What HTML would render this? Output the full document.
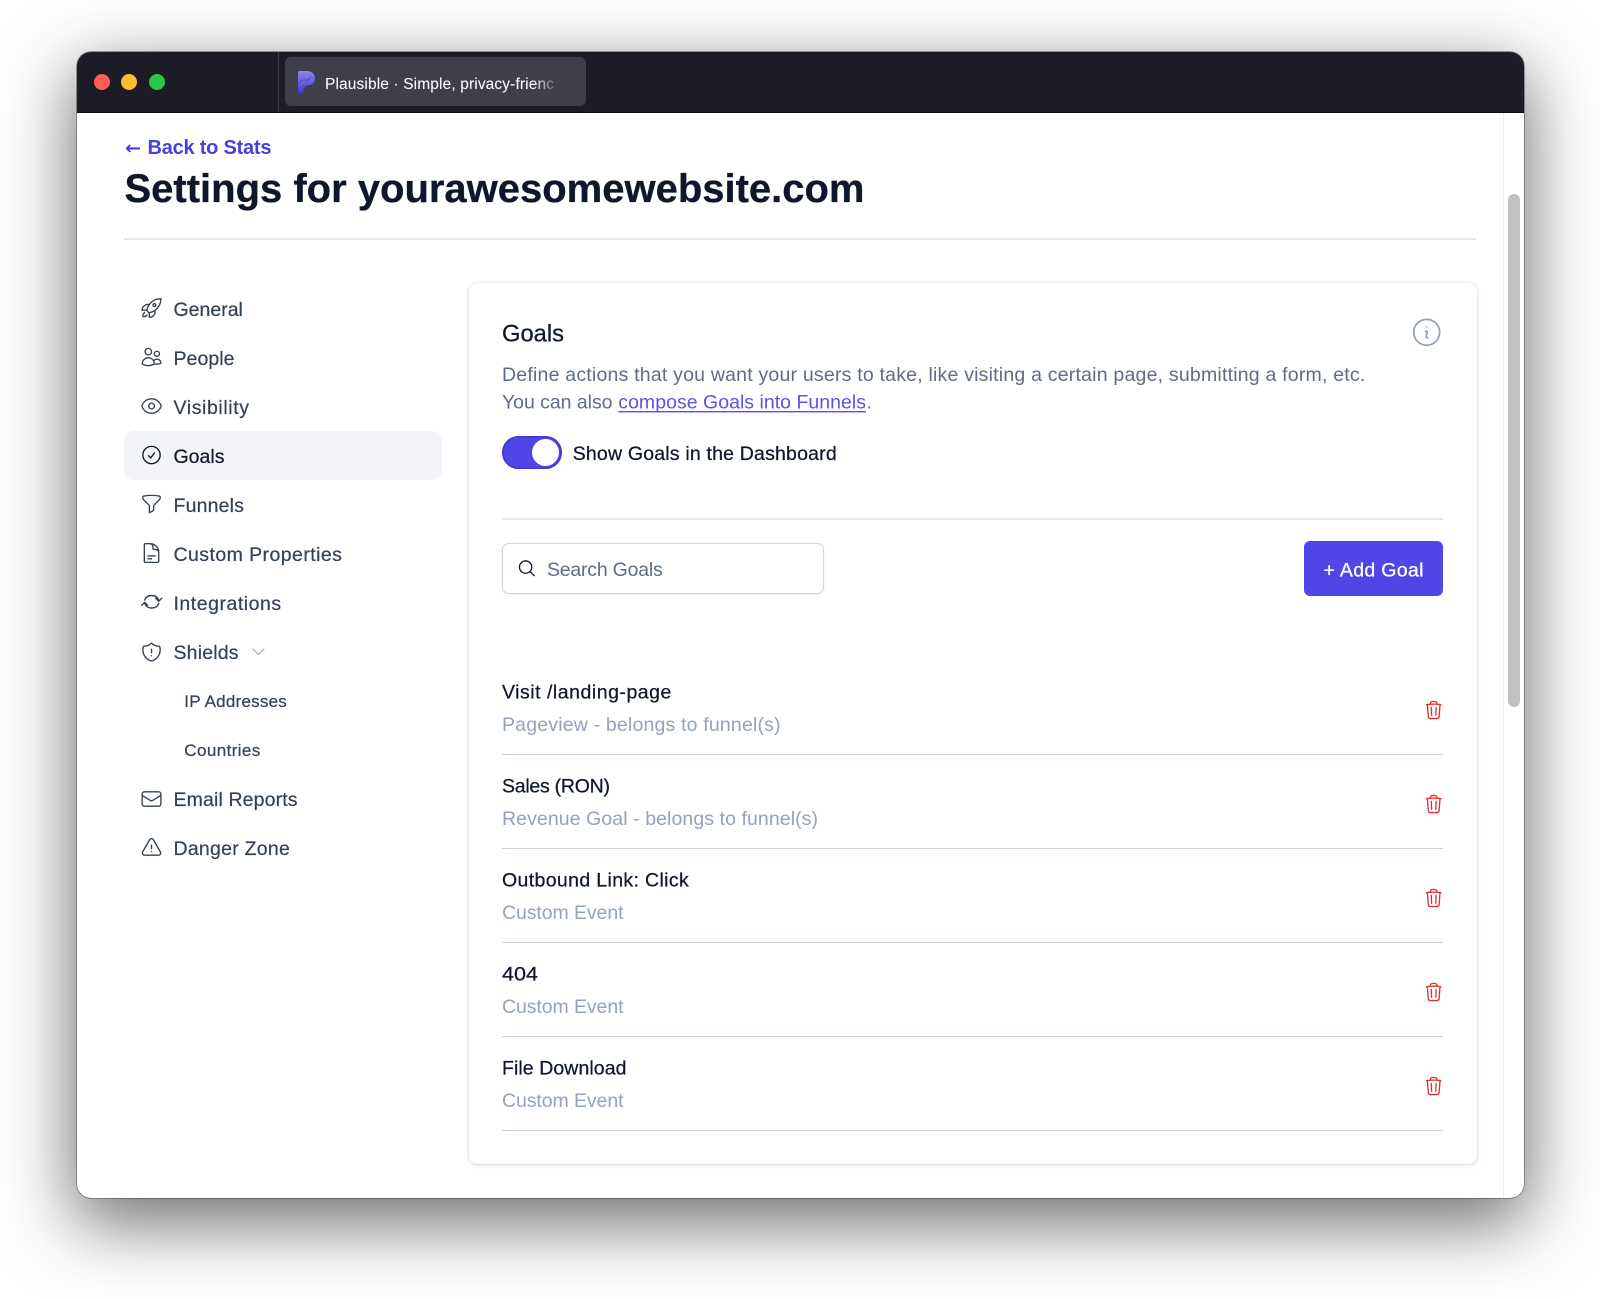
<!DOCTYPE html>
<html lang="en">
<head>
<meta charset="utf-8">
<title>Settings for yourawesomewebsite.com</title>
<style>
html,body{margin:0;padding:0;background:#fff;width:1600px;height:1299px;overflow:hidden;font-family:"Liberation Sans",sans-serif}
.win{position:absolute;left:76.5px;top:52px;width:1447px;height:1146px;border-radius:14px;background:#fff;box-shadow:0 0 0 .6px rgba(50,50,50,.7),0 22px 70px 4px rgba(0,0,0,.56)}
.clip{position:absolute;inset:0;border-radius:14px;overflow:hidden}
.bar{position:absolute;left:0;top:0;right:0;height:61px;background:#1c1c26;border-bottom:1px solid #0c0c10;box-sizing:border-box}
.sep{position:absolute;left:201.5px;top:0;width:1px;height:60px;background:#3d3d48}
.tab{position:absolute;left:208.5px;top:5px;width:301px;height:49px;border-radius:6px;background:#3f3e4b}
.dot{position:absolute;top:22px;width:16px;height:16px;border-radius:50%}
.vline{position:absolute;left:1426.5px;top:61px;bottom:0;width:1px;background:#eceef3}
.thumb{position:absolute;left:1431.5px;top:142px;width:12px;height:513px;border-radius:6px;background:#c1c1c1}
.hr{position:absolute;height:1.5px;background:#e2e8f0}
.active{position:absolute;left:47.5px;top:379px;width:318px;height:49px;border-radius:10px;background:#f2f4f8}
.card{position:absolute;left:392px;top:231px;width:1008px;height:881px;border-radius:8px;background:#fff;box-shadow:0 1px 4px rgba(30,41,59,.16),0 0 0 1px rgba(30,41,59,.03)}
.toggle{position:absolute;left:425.5px;top:384px;width:60px;height:33px;border-radius:17px;background:#4f46e5;box-shadow:inset 0 0 0 1.5px #4338ca}
.knob{position:absolute;left:30px;top:3px;width:27px;height:27px;border-radius:50%;background:#fff}
.search{position:absolute;left:425.5px;top:491px;width:322px;height:51px;box-sizing:border-box;border:1.6px solid #ccd5e3;border-radius:7px;background:#fff;box-shadow:0 1px 2px rgba(0,0,0,.06)}
.btn{position:absolute;left:1227.5px;top:489px;width:139px;height:55px;border-radius:6px;background:#4f46e5}
.line{position:absolute;left:425.5px;width:941px;height:1.5px;background:#c8d1e0}
svg.o{position:absolute;left:0;top:0}
text{font-family:"Liberation Sans",sans-serif}
.nav{font-size:19.5px;fill:#334155;stroke:#334155;stroke-width:.2}
.sub{font-size:17px;fill:#334155;stroke:#334155;stroke-width:.2}
.t{font-size:19.5px;fill:#0f172a;stroke:#0f172a;stroke-width:.25}
.s{font-size:19.5px;fill:#94a3b8}
.d{font-size:19.5px;fill:#5f6c86}
.ic{fill:none;stroke:#334155;stroke-width:1.4;stroke-linecap:round;stroke-linejoin:round}
</style>
</head>
<body>
<div class="win">
  <div class="clip">
    <div class="bar">
      <div class="dot" style="left:17.5px;background:#ff5f57"></div>
      <div class="dot" style="left:44.8px;background:#febc2e"></div>
      <div class="dot" style="left:72.3px;background:#28c840"></div>
      <div class="sep"></div>
      <div class="tab"></div>
    </div>
    <div class="vline"></div>
    <div class="thumb"></div>
    <div class="hr" style="left:47.5px;top:186px;width:1352px"></div>
    <div class="active"></div>
    <div class="card"></div>
    <div class="toggle"><div class="knob"></div></div>
    <div class="hr" style="left:425.5px;top:466px;width:941px"></div>
    <div class="search"></div>
    <div class="btn"></div>
    <div class="line" style="top:701.5px"></div>
    <div class="line" style="top:795.5px"></div>
    <div class="line" style="top:889.5px"></div>
    <div class="line" style="top:983.5px"></div>
    <div class="line" style="top:1077.5px"></div>
  </div>
</div>
<svg class="o" width="1600" height="1299" viewBox="0 0 1600 1299" xmlns="http://www.w3.org/2000/svg">
  <defs>
    <linearGradient id="fade" gradientUnits="userSpaceOnUse" x1="325" y1="0" x2="556" y2="0">
      <stop offset="0" stop-color="#fff"/><stop offset=".9" stop-color="#fff"/><stop offset="1" stop-color="#fff" stop-opacity=".1"/>
    </linearGradient>
    <linearGradient id="lg" x1="0" y1="0" x2="0" y2="1">
      <stop offset="0" stop-color="#8b86f2"/><stop offset="1" stop-color="#4338ca"/>
    </linearGradient>
    <g id="trash"><path fill="none" stroke="#ea2a2a" stroke-width="1.5" stroke-linecap="round" stroke-linejoin="round" d="m14.74 9-.346 9m-4.788 0L9.26 9m9.968-3.21c.342.052.682.107 1.022.166m-1.022-.165L18.16 19.673a2.25 2.25 0 0 1-2.244 2.077H8.084a2.25 2.25 0 0 1-2.244-2.077L4.772 5.79m14.456 0a48.108 48.108 0 0 0-3.478-.397m-12 .562c.34-.059.68-.114 1.022-.165m0 0a48.11 48.11 0 0 1 3.478-.397m7.5 0v-.916c0-1.18-.91-2.164-2.09-2.201a51.964 51.964 0 0 0-3.32 0c-1.18.037-2.09 1.022-2.09 2.201v.916m7.5 0a48.667 48.667 0 0 0-7.5 0"/></g>
  </defs>

  <!-- tab -->
  <path fill="url(#lg)" d="M298 72.500q0-1.500 1.500-1.500h8a7.500 7.500 0 0 1 7.500 7.500c0 3.500-2 6-5 6.500-2 .3-3 0-5 1.500-1.500 1.200-1.500 2-1.500 3v2.500q0 1.500-1.500 1.500h-3q-1 0-1-1.500z"/>
  <path fill="none" stroke="#3b34b8" stroke-width="1" opacity=".6" d="M298.500 84c2-3.500 4-4.500 6.500-4s4 0 6-3.500"/>
  <text x="325" y="89" font-size="15.500" fill="url(#fade)" stroke="#fff" stroke-opacity=".25" stroke-width=".2" textLength="229" lengthAdjust="spacing">Plausible · Simple, privacy-frienc</text>

  <!-- header -->
  <text x="125" y="154" font-size="18" font-weight="700" style="font-family:'DejaVu Sans',sans-serif" fill="#4640e0" textLength="16" lengthAdjust="spacingAndGlyphs">←</text>
  <text x="147.500" y="154" font-size="20" font-weight="700" fill="#4640e0" textLength="124" lengthAdjust="spacing">Back to Stats</text>
  <text x="124.500" y="202" font-size="40" font-weight="700" fill="#0f172a" stroke="#0f172a" stroke-width=".3" textLength="740" lengthAdjust="spacingAndGlyphs">Settings for yourawesomewebsite.com</text>

  <!-- nav icons -->
  <g class="ic" transform="translate(140 296.500) scale(.96)"><path d="M15.590 14.370a6 6 0 0 1-5.840 7.380v-4.800m5.840-2.580a14.980 14.980 0 0 0 6.160-12.120A14.980 14.980 0 0 0 9.631 8.410m5.960 5.960a14.926 14.926 0 0 1-5.841 2.580m-.119-8.540a6 6 0 0 0-7.381 5.840h4.800m2.581-5.840a14.927 14.927 0 0 0-2.580 5.840m2.699 2.700c-.103.021-.207.041-.311.060a15.090 15.090 0 0 1-2.448-2.448 14.900 14.900 0 0 1 .060-.312m-2.240 2.390a4.493 4.493 0 0 0-1.757 4.306 4.493 4.493 0 0 0 4.306-1.758M16.500 9a1.500 1.500 0 1 1-3 0 1.500 1.500 0 0 1 3 0Z"/></g>
  <g class="ic" transform="translate(140 345.500) scale(.96)"><path d="M15 19.128a9.380 9.380 0 0 0 2.625.372 9.337 9.337 0 0 0 4.121-.952 4.125 4.125 0 0 0-7.533-2.493M15 19.128v-.003c0-1.113-.285-2.160-.786-3.070M15 19.128v.106A12.318 12.318 0 0 1 8.624 21c-2.331 0-4.512-.645-6.374-1.766l-.001-.109a6.375 6.375 0 0 1 11.964-3.070M12 6.375a3.375 3.375 0 1 1-6.750 0 3.375 3.375 0 0 1 6.750 0Zm8.250 2.250a2.625 2.625 0 1 1-5.250 0 2.625 2.625 0 0 1 5.250 0Z"/></g>
  <g class="ic" transform="translate(140 394.500) scale(.96)"><path d="M2.036 12.322a1.012 1.012 0 0 1 0-.639C3.423 7.510 7.360 4.500 12 4.500c4.638 0 8.573 3.007 9.963 7.178.070.207.070.431 0 .639C20.577 16.490 16.640 19.500 12 19.500c-4.638 0-8.573-3.007-9.963-7.178Z"/><path d="M15 12a3 3 0 1 1-6 0 3 3 0 0 1 6 0Z"/></g>
  <g class="ic" style="stroke:#0f172a" transform="translate(140 443.500) scale(.96)"><path d="M9 12.750 11.250 15 15 9.750M21 12a9 9 0 1 1-18 0 9 9 0 0 1 18 0Z"/></g>
  <g class="ic" transform="translate(140 492.500) scale(.96)"><path d="M12 3c2.755 0 5.455.232 8.083.678.533.090.917.556.917 1.096v1.044a2.250 2.250 0 0 1-.659 1.591l-5.432 5.432a2.250 2.250 0 0 0-.659 1.591v2.927a2.250 2.250 0 0 1-1.244 2.013L9.750 21v-6.568a2.250 2.250 0 0 0-.659-1.591L3.659 7.409A2.250 2.250 0 0 1 3 5.818V4.774c0-.540.384-1.006.917-1.096A48.320 48.320 0 0 1 12 3Z"/></g>
  <g class="ic" transform="translate(140 541.500) scale(.96)"><path d="M19.500 14.250v-2.625a3.375 3.375 0 0 0-3.375-3.375h-1.500A1.125 1.125 0 0 1 13.500 7.125v-1.500a3.375 3.375 0 0 0-3.375-3.375H8.250m0 12.750h7.500m-7.500 3H12M10.500 2.250H5.625c-.621 0-1.125.504-1.125 1.125v17.250c0 .621.504 1.125 1.125 1.125h12.750c.621 0 1.125-.504 1.125-1.125V11.250a9 9 0 0 0-9-9Z"/></g>
  <g class="ic"><path d="M144.700 600C146 596.500 148.500 595.500 151.500 595.500c4 0 7 2 7.200 5.800M155.700 598.300l3 3 3-3M158.700 603.500C157.500 607 155 608 151.500 608c-3.500 0-6.500-1.800-6.800-5.800M141.700 605.300l3-3.100 3 3.100"/></g>
  <g class="ic" transform="translate(140 640.500) scale(.96)"><path d="M12 9v3.750m0-10.036A11.959 11.959 0 0 1 3.598 6 11.990 11.990 0 0 0 3 9.750c0 5.592 3.824 10.290 9 11.622 5.176-1.332 9-6.030 9-11.622 0-1.310-.210-2.570-.598-3.750h-.152c-3.196 0-6.100-1.250-8.250-3.286Zm0 13.036h.008v.008H12v-.008Z"/></g>
  <g class="ic" style="stroke:#94a3b8" transform="translate(249.700 643) scale(.73)"><path d="m19.500 8.250-7.500 7.500-7.500-7.500"/></g>
  <g class="ic" transform="translate(140 787.500) scale(.96)"><path d="M21.750 6.750v10.500a2.250 2.250 0 0 1-2.250 2.250h-15a2.250 2.250 0 0 1-2.250-2.250V6.750m19.500 0A2.250 2.250 0 0 0 19.500 4.500h-15a2.250 2.250 0 0 0-2.250 2.250m19.500 0v.243a2.250 2.250 0 0 1-1.070 1.916l-7.500 4.615a2.250 2.250 0 0 1-2.360 0L3.320 8.910a2.250 2.250 0 0 1-1.070-1.916V6.750"/></g>
  <g class="ic" transform="translate(140 836.500) scale(.96)"><path d="M12 9v3.750m-9.303 3.376c-.866 1.500.217 3.374 1.948 3.374h14.710c1.730 0 2.813-1.874 1.948-3.374L13.949 3.378c-.866-1.500-3.032-1.500-3.898 0L2.697 16.126ZM12 15.750h.007v.008H12v-.008Z"/></g>

  <!-- nav text -->
  <text class="nav" x="173.500" y="316" textLength="69.400">General</text>
  <text class="nav" x="173.500" y="365" textLength="61">People</text>
  <text class="nav" x="173.500" y="414" textLength="75.500">Visibility</text>
  <text class="nav" style="fill:#0f172a;stroke:#0f172a" x="173.500" y="463" textLength="51">Goals</text>
  <text class="nav" x="173.500" y="512" textLength="70.400">Funnels</text>
  <text class="nav" x="173.500" y="561" textLength="168.400">Custom Properties</text>
  <text class="nav" x="173.500" y="610" textLength="107.600">Integrations</text>
  <text class="nav" x="173.500" y="659" textLength="65">Shields</text>
  <text class="sub" x="184.300" y="707" textLength="102.500">IP Addresses</text>
  <text class="sub" x="184.300" y="756" textLength="76">Countries</text>
  <text class="nav" x="173.500" y="806" textLength="124">Email Reports</text>
  <text class="nav" x="173.500" y="855" textLength="116.300">Danger Zone</text>

  <!-- card head -->
  <text x="502" y="341.700" font-size="24" fill="#0f172a" stroke="#0f172a" stroke-width=".25" textLength="62" lengthAdjust="spacingAndGlyphs">Goals</text>
  <g class="ic" style="stroke:#8fa0b8" transform="translate(1409.400 315) scale(1.44)"><path stroke-width="1.200" d="m11.250 11.250.041-.020a.750.750 0 0 1 1.063.852l-.708 2.836a.750.750 0 0 0 1.063.853l.041-.021M21 12a9 9 0 1 1-18 0 9 9 0 0 1 18 0Zm-9-3.750h.008v.008H12V8.250Z"/></g>
  <text class="d" x="502" y="381" textLength="863.300">Define actions that you want your users to take, like visiting a certain page, submitting a form, etc.</text>
  <text class="d" x="502" y="408.300" textLength="110.500">You can also</text>
  <text class="d" style="fill:#5a55ea" x="618.300" y="408.300" textLength="247.700">compose Goals into Funnels</text>
  <rect x="618.300" y="411" width="247.700" height="1.400" fill="#5a55ea"/>
  <text class="d" x="866.500" y="408.300">.</text>
  <text class="t" x="572.700" y="460" textLength="264">Show Goals in the Dashboard</text>

  <!-- search + button -->
  <g class="ic" style="stroke:#0f172a" transform="translate(517 558.500) scale(.82)"><path stroke-width="1.600" d="m21 21-5.197-5.197m0 0A7.500 7.500 0 1 0 5.196 5.196a7.500 7.500 0 0 0 10.607 10.607Z"/></g>
  <text class="d" x="547" y="576" textLength="115.700">Search Goals</text>
  <text x="1323.500" y="576.500" font-size="19.500" fill="#fff" stroke="#fff" stroke-width=".3" textLength="100">+ Add Goal</text>

  <!-- rows -->
  <text class="t" x="502" y="698.300" textLength="169.400">Visit /landing-page</text>
  <text class="s" x="502" y="731" textLength="278.600">Pageview - belongs to funnel(s)</text>
  <text class="t" x="502" y="792.300" textLength="108">Sales (RON)</text>
  <text class="s" x="502" y="825" textLength="316">Revenue Goal - belongs to funnel(s)</text>
  <text class="t" x="502" y="886.300" textLength="186.700">Outbound Link: Click</text>
  <text class="s" x="502" y="919" textLength="121.500">Custom Event</text>
  <text class="t" x="502" y="980.300" textLength="36" lengthAdjust="spacingAndGlyphs">404</text>
  <text class="s" x="502" y="1013" textLength="121.500">Custom Event</text>
  <text class="t" x="502" y="1074.300" textLength="124.500">File Download</text>
  <text class="s" x="502" y="1107" textLength="121.500">Custom Event</text>

  <use href="#trash" transform="translate(1423.200 699.500) scale(.875)"/>
  <use href="#trash" transform="translate(1423.200 793.500) scale(.875)"/>
  <use href="#trash" transform="translate(1423.200 887.500) scale(.875)"/>
  <use href="#trash" transform="translate(1423.200 981.500) scale(.875)"/>
  <use href="#trash" transform="translate(1423.200 1075.500) scale(.875)"/>
</svg>
</body>
</html>
